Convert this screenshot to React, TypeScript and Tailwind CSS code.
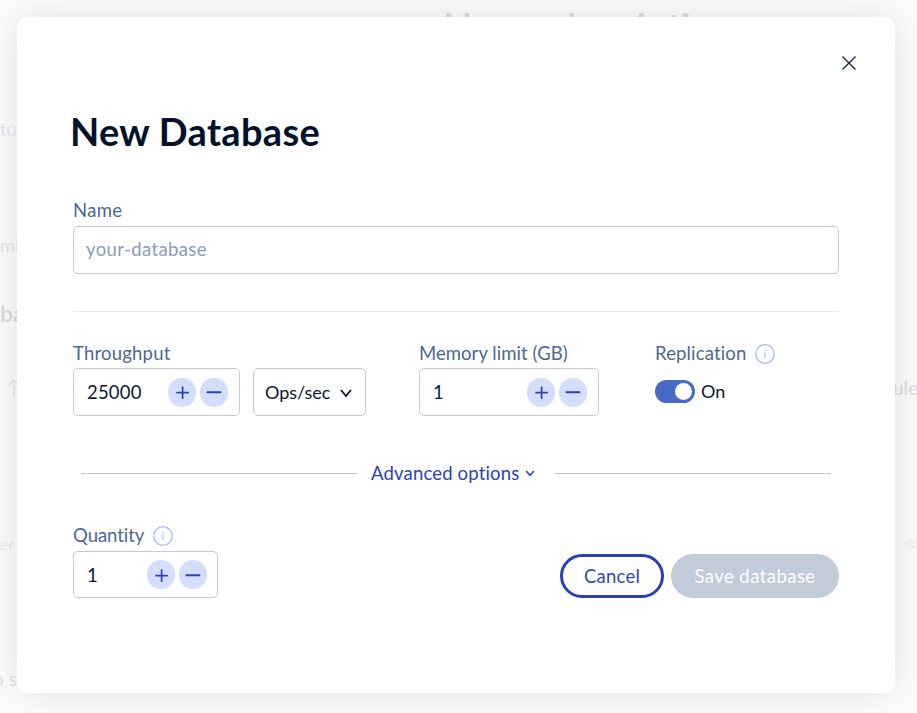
import type { ReactNode } from "react";

function Backdrop() {
  return (
    <div className="absolute inset-0 select-none" aria-hidden="true">
      <span className="absolute left-[443px] top-[4px] text-[38px] leading-[44px] font-bold tracking-[-0.300px] text-[#dcdedf] whitespace-nowrap">New subscription</span>
      <span className="absolute left-0 top-[117px] text-[18px] leading-6 text-[#e6e8f2]">tu</span>
      <span className="absolute left-0 top-[233px] text-[18px] leading-6 text-[#e6e7e9]">mi</span>
      <span className="absolute left-0 top-[299px] text-[23px] leading-7 font-semibold text-[#dddee0]">ba</span>
      <svg className="absolute left-[7px] top-[378px]" width="14" height="20" viewBox="0 0 14 20" fill="none" stroke="#e3e4ec" strokeWidth="1.2">
        <path d="M7 19V2M1 8l6-6 6 6" />
      </svg>
      <span className="absolute left-0 top-[532px] text-[16px] leading-6 text-[#ececed]">er</span>
      <span className="absolute left-0 top-[667px] -indent-[7px] text-[19px] leading-6 text-[#e2e4ef] whitespace-nowrap">o s</span>
      <span className="absolute left-[893px] top-[376px] text-[19px] leading-6 font-medium text-[#dedfe1]">ule</span>
      <svg className="absolute left-[904px] top-[538px]" width="13" height="13" viewBox="0 0 13 13" fill="none" stroke="#ebeced" strokeWidth="1">
        <path d="M7 1L1.500 6.500 7 12M12.500 1L7 6.500l5.500 5.500" />
      </svg>
    </div>
  );
}

function InfoIcon() {
  return (
    <svg width="20" height="20" viewBox="0 0 20 20" fill="none" stroke="#a3bbf3">
      <circle cx="10" cy="10" r="9.300" strokeWidth="1.300" />
      <path d="M10 8.300v5.700" strokeWidth="1.100" />
      <path d="M10 5.800v1.300" strokeWidth="1.100" />
    </svg>
  );
}

function RoundButton({ kind }: { kind: "plus" | "minus" }) {
  return (
    <button className="flex h-[29px] w-7 items-center justify-center rounded-full bg-[#d3ddfc]" aria-label={kind}>
      <svg width="16" height="16" viewBox="0 0 16 16" fill="none" stroke="#2b43b4" strokeLinecap="round">
        {kind === "plus" ? <path d="M3 8.600H14.200M8.600 3v11.200" strokeWidth="1.700" /> : <path d="M1.500 8.300h13" strokeWidth="1.900" />}
      </svg>
    </button>
  );
}

function Stepper({ value, className }: { value: string; className: string }) {
  return (
    <div className={`flex items-center rounded-[5px] border border-[#c3cad9] pl-[13px] ${className}`}>
      <span className="flex-1 tracking-[0.200px] text-[#091a32]">{value}</span>
      <div className="flex gap-1">
        <RoundButton kind="plus" />
        <RoundButton kind="minus" />
      </div>
    </div>
  );
}

function Label({ children, className = "" }: { children: ReactNode; className?: string }) {
  return <div className={`flex h-6 items-center whitespace-nowrap text-[#4c6893] ${className}`}>{children}</div>;
}

export default function App() {
  return (
    <div className="relative h-[713px] w-[917px] overflow-hidden bg-[#fcfcfc] p-[17px] font-['Lato',sans-serif] text-[18.500px] leading-6 [font-variant-ligatures:none]">
      <Backdrop />
      <main className="relative h-[676px] w-[878px] rounded-[10px] bg-white px-14 pt-[39px] shadow-[0_0_42px_rgba(0,0,0,0.11)]">
        <div className="-mr-[17px] flex h-[14px] justify-end">
          <button aria-label="Close">
            <svg width="14" height="14" viewBox="0 0 14 14" fill="none" stroke="#14233f" strokeWidth="1.300">
              <path d="M.5.5l13 13M13.500.5l-13 13" />
            </svg>
          </button>
        </div>
        <h1 className="-ml-[3px] mt-[37px] h-12 text-[38px] leading-[48px] font-bold tracking-[0.300px] text-[#02122b]">New Database</h1>

        <Label className="mt-[43px] tracking-[0.300px]">Name</Label>
        <div className="mt-[4px] flex h-12 items-center rounded-[5px] border border-[#c3cad9] px-3 pb-[2px] tracking-[0.380px] text-[#8a9dba]">your-database</div>
        <hr className="mt-[37px] border-[#e6e8ea]" />

        <div className="mt-[29px] flex">
          <div className="w-[346px]">
            <Label className="tracking-[0.200px]">Throughput</Label>
            <div className="mt-[3px] flex gap-[13px]">
              <Stepper value="25000" className="h-12 w-[167px] pr-[11px]" />
              <button className="flex h-12 w-[113px] items-center justify-between rounded-[5px] border border-[#c3cad9] pl-[11px] pr-[13px] text-[18px] text-[#091a32]">
                <span>Ops/sec</span>
                <svg className="mt-[3px]" width="12" height="9" viewBox="0 0 12 9" fill="none" stroke="#091a32" strokeWidth="1.900">
                  <path d="M1 1l5 6 5-6" />
                </svg>
              </button>
            </div>
          </div>
          <div className="w-[236px]">
            <Label className="tracking-[0.060px]">Memory limit (GB)</Label>
            <Stepper value="1" className="mt-[3px] h-12 w-[180px] pr-[11px]" />
          </div>
          <div>
            <Label className="gap-[9px]">
              <span className="tracking-[0.150px]">Replication</span>
              <span className="mt-[2px]"><InfoIcon /></span>
            </Label>
            <div className="mt-[14px] flex h-6 items-center gap-[6px] text-[18px] text-[#091a32]">
              <span className="flex h-[23px] w-10 items-center justify-end rounded-full bg-[#4869c7] pr-[3px]">
                <span className="size-[17px] rounded-full bg-white" />
              </span>
              <span>On</span>
            </div>
          </div>
        </div>

        <div className="mt-[45px] flex items-center px-2">
          <span className="h-px w-[276px] bg-[#bec8d1]" />
          <button className="ml-[14px] flex flex-1 items-center gap-[6px] whitespace-nowrap text-[#2b43b4]">
            <span className="tracking-[0.170px]">Advanced options</span>
            <svg width="10" height="7" viewBox="0 0 9 7" fill="none" stroke="currentColor" strokeWidth="1.500">
              <path d="M.7 1l3.800 4.300L8.300 1" />
            </svg>
          </button>
          <span className="h-px w-[276px] bg-[#bec8d1]" />
        </div>

        <div className="mt-[38px] flex items-end justify-between">
          <div>
            <Label className="gap-[9px]">
              <span className="tracking-[-0.030px]">Quantity</span>
              <span className="mt-[2px]"><InfoIcon /></span>
            </Label>
            <Stepper value="1" className="mt-[4px] h-[47px] w-[145px] pr-[10px]" />
          </div>
          <div className="flex gap-[7px]">
            <button className="h-[44px] w-[104px] rounded-full border-[3px] border-[#2941b3] tracking-[0.250px] text-[#2f48ba]">Cancel</button>
            <button className="h-[44px] w-[168px] rounded-full bg-[#c2cbda] tracking-[0.450px] text-white">Save database</button>
          </div>
        </div>
      </main>
    </div>
  );
}
